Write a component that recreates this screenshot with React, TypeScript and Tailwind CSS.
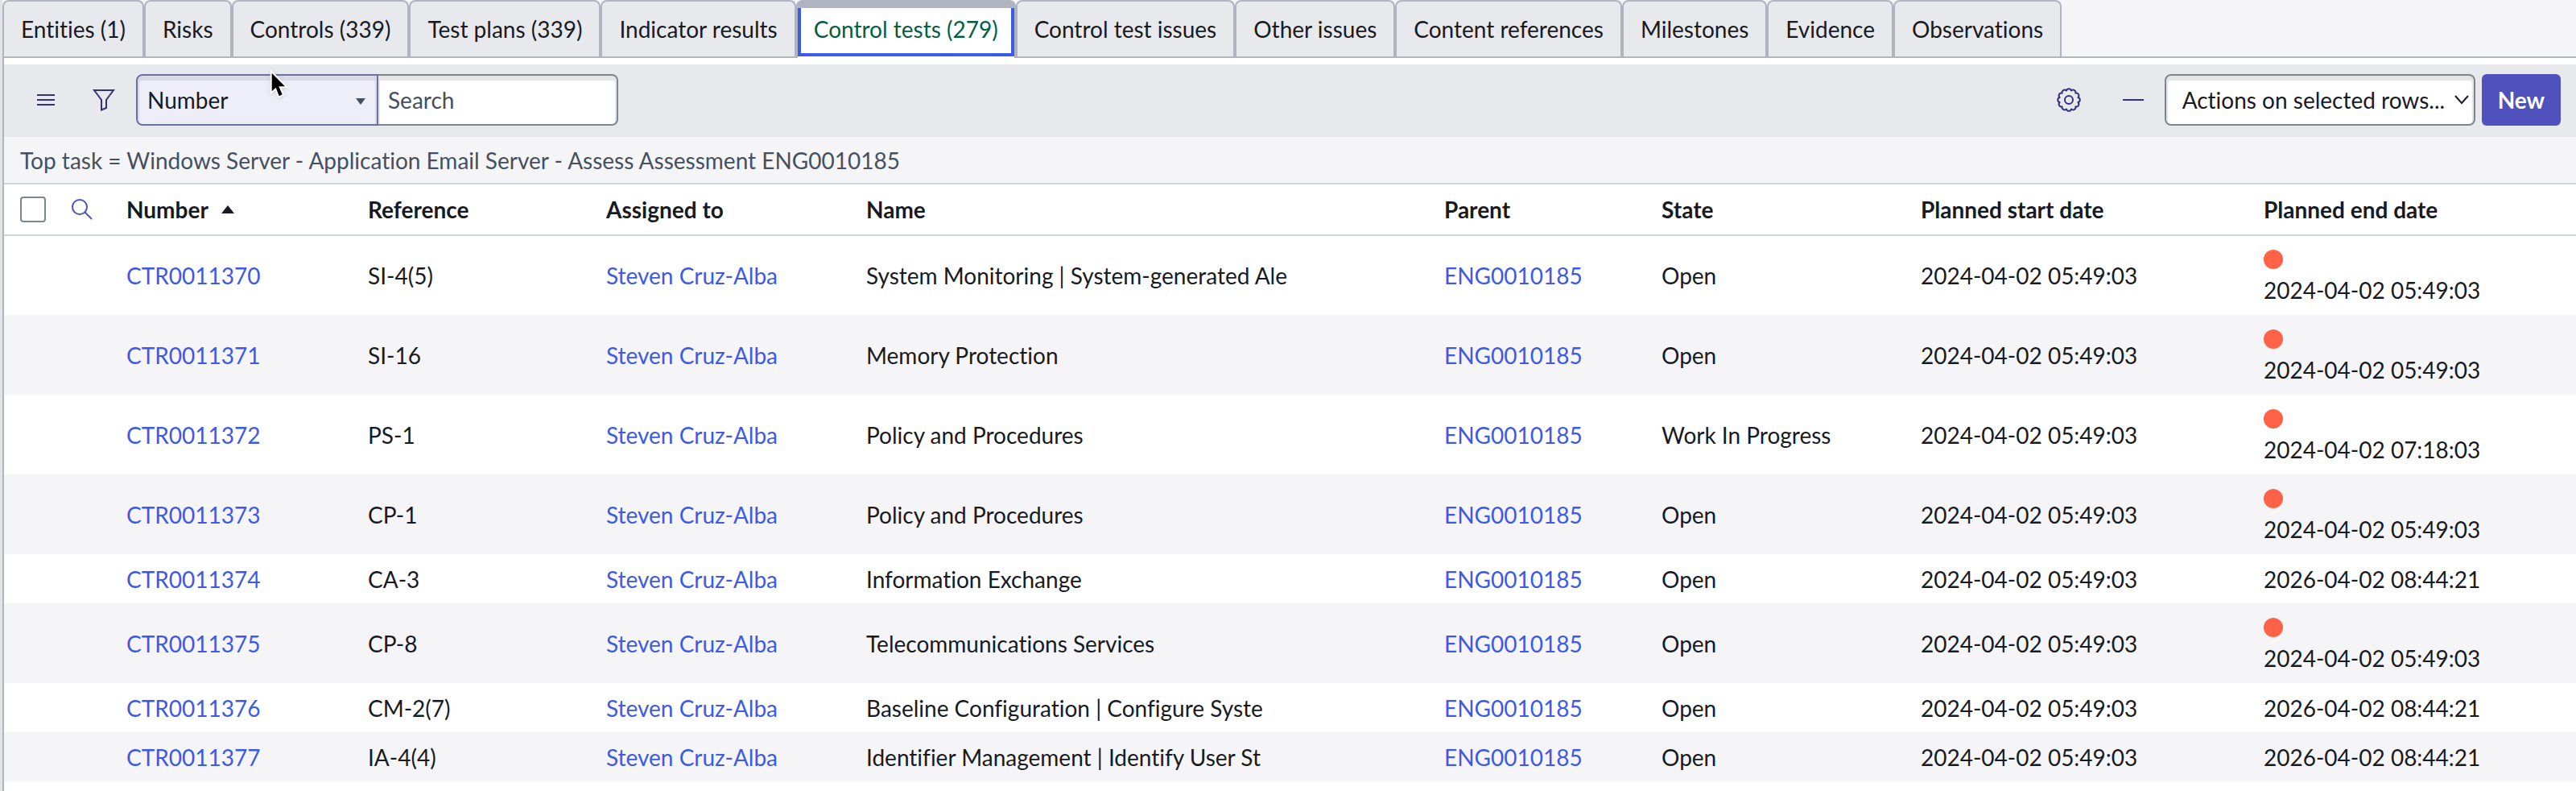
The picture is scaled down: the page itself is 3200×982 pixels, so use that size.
import { useState } from 'react';

type Row = {
  number: string;
  reference: string;
  name: string;
  state: string;
  end: string;
  overdue: boolean;
};

const TABS = [
  'Entities (1)',
  'Risks',
  'Controls (339)',
  'Test plans (339)',
  'Indicator results',
  'Control tests (279)',
  'Control test issues',
  'Other issues',
  'Content references',
  'Milestones',
  'Evidence',
  'Observations',
];

const ROWS: Row[] = [
  { number: 'CTR0011370', reference: 'SI-4(5)', name: 'System Monitoring | System-generated Ale', state: 'Open', end: '2024-04-02 05:49:03', overdue: true },
  { number: 'CTR0011371', reference: 'SI-16', name: 'Memory Protection', state: 'Open', end: '2024-04-02 05:49:03', overdue: true },
  { number: 'CTR0011372', reference: 'PS-1', name: 'Policy and Procedures', state: 'Work In Progress', end: '2024-04-02 07:18:03', overdue: true },
  { number: 'CTR0011373', reference: 'CP-1', name: 'Policy and Procedures', state: 'Open', end: '2024-04-02 05:49:03', overdue: true },
  { number: 'CTR0011374', reference: 'CA-3', name: 'Information Exchange', state: 'Open', end: '2026-04-02 08:44:21', overdue: false },
  { number: 'CTR0011375', reference: 'CP-8', name: 'Telecommunications Services', state: 'Open', end: '2024-04-02 05:49:03', overdue: true },
  { number: 'CTR0011376', reference: 'CM-2(7)', name: 'Baseline Configuration | Configure Syste', state: 'Open', end: '2026-04-02 08:44:21', overdue: false },
  { number: 'CTR0011377', reference: 'IA-4(4)', name: 'Identifier Management | Identify User St', state: 'Open', end: '2026-04-02 08:44:21', overdue: false },
];

function TabBar({ active, onSelect }: { active: string; onSelect: (tab: string) => void }) {
  return (
    <div role="tablist" className="-ml-0.5 flex items-start border-b-2 border-[#b0b4c0] bg-[#f5f5f8]">
      {TABS.map((tab) =>
        tab === active ? (
          <button
            key={tab}
            role="tab"
            aria-selected
            className="-mb-0.5 h-[72px] rounded-t-lg border-x-2 border-t-10 border-[#b0b4c0] bg-white pb-0.5 text-[#035e42]"
          >
            <span className="flex h-[60px] items-center border-x-4 border-b-4 border-[#3c59e7] px-4 pb-1">{tab}</span>
          </button>
        ) : (
          <button
            key={tab}
            role="tab"
            aria-selected={false}
            onClick={() => onSelect(tab)}
            className="h-[70px] rounded-t-lg border-x-2 border-t-2 border-[#b0b4c0] bg-[#e8e9ed] px-[21px]"
          >
            {tab}
          </button>
        )
      )}
    </div>
  );
}

function Toolbar() {
  return (
    <div className="flex h-[90px] items-center bg-[#e8e9ed] pr-[19px] pb-0.5 pl-5 text-[#32327f]">
      <button aria-label="List controls" className="flex w-16 justify-center">
        <svg width="22" height="16" viewBox="0 0 22 16" stroke="currentColor" strokeWidth="2">
          <path d="M0 2h22M0 8h22M0 14h22" />
        </svg>
      </button>
      <button aria-label="Filter" className="flex w-20 justify-center">
        <svg width="28" height="28" viewBox="0 0 28 28" fill="none" stroke="currentColor" strokeWidth="2">
          <path d="M2 2h24l-9 12v10l-6 2.500V14z" />
        </svg>
      </button>
      <div className="relative">
        <select
          aria-label="Search field"
          className="block h-16 w-[301px] appearance-none rounded-l-lg border-2 border-[#6a70a8] bg-[#eeeef9] pl-3 text-[#181a22] shadow-[inset_0_4px_0_2px_#dad9e3]"
        >
          <option>Number</option>
        </select>
        <svg className="pointer-events-none absolute top-[30px] right-4" width="12" height="8" viewBox="0 0 12 8" fill="#464f5e">
          <path d="M0 0h12L6 8z" />
        </svg>
      </div>
      <input
        type="search"
        aria-label="Search"
        placeholder="Search"
        className="h-16 w-[298px] rounded-r-lg border-2 border-l-0 border-[#7c8592] bg-white px-3 shadow-[inset_0_4px_0_2px_#e6e6e6] placeholder:text-[#464f5e]"
      />
      <button aria-label="Personalize list" className="ml-auto">
        <svg width="30" height="30" viewBox="0 0 30 30" fill="none" stroke="currentColor" strokeWidth="2">
          <circle cx="15" cy="15" r="5" />
          <path
            strokeLinejoin="round"
            d="M11.950 3.600A3.150 3.150 0 0 1 18.050 3.600A3.150 3.150 0 0 1 23.340 6.660A3.150 3.150 0 0 1 26.400 11.950A3.150 3.150 0 0 1 26.400 18.050A3.150 3.150 0 0 1 23.340 23.340A3.150 3.150 0 0 1 18.050 26.400A3.150 3.150 0 0 1 11.950 26.400A3.150 3.150 0 0 1 6.660 23.340A3.150 3.150 0 0 1 3.600 18.050A3.150 3.150 0 0 1 3.600 11.950A3.150 3.150 0 0 1 6.660 6.660A3.150 3.150 0 0 1 11.950 3.600Z"
          />
        </svg>
      </button>
      <button aria-label="Collapse" className="mr-[26px] ml-[52px]">
        <svg width="26" height="30" viewBox="0 0 26 30" stroke="currentColor" strokeWidth="2">
          <path d="M0 15h26" />
        </svg>
      </button>
      <div className="relative mr-2">
        <select
          aria-label="Actions on selected rows"
          className="block h-16 w-[386px] appearance-none rounded-lg border-2 border-[#7c8592] bg-white pl-5 text-[#181a22] shadow-[inset_0_4px_0_2px_#e6e6e6]"
        >
          <option>Actions on selected rows...</option>
        </select>
        <svg className="pointer-events-none absolute top-[26px] right-2" width="18" height="12" viewBox="0 0 18 12" fill="none" stroke="#181a22" strokeWidth="2">
          <path d="M1 1l8 9 8-9" />
        </svg>
      </div>
      <button className="h-16 rounded-md bg-[#4f52bd] px-5 font-bold text-white">New</button>
    </div>
  );
}

function ControlTable() {
  return (
    <table className="w-full table-fixed text-left">
      <thead>
        <tr className="h-[63px] border-b-2 border-[#cfd5dd]">
          <th className="w-[76px] pl-5">
            <input
              type="checkbox"
              aria-label="Select all rows"
              className="block size-8 appearance-none rounded-sm border-2 border-[#7c8592] bg-white"
            />
          </th>
          <th className="w-[76px] pl-2">
            <button aria-label="Search columns" className="block text-[#4f52bd]">
              <svg width="26" height="26" viewBox="0 0 26 26" fill="none" stroke="currentColor" strokeWidth="2">
                <circle cx="10" cy="10" r="9" />
                <path d="M16 16l9 9" />
              </svg>
            </button>
          </th>
          <th className="w-[300px]">
            <span className="flex items-center gap-4">
              Number
              <svg width="16" height="10" viewBox="0 0 16 10" fill="currentColor">
                <path d="M8 0l8 10H0z" />
              </svg>
            </span>
          </th>
          <th className="w-[296px]">Reference</th>
          <th className="w-[323px]">Assigned to</th>
          <th className="w-[718px]">Name</th>
          <th className="w-[270px]">Parent</th>
          <th className="w-[322px]">State</th>
          <th className="w-[426px]">Planned start date</th>
          <th>Planned end date</th>
        </tr>
      </thead>
      <tbody>
        {ROWS.map((row) => (
          <tr key={row.number} className="h-[61px] even:bg-[#f5f5f8]">
            <td />
            <td />
            <td><a href="#" className="text-[#3c59e7]">{row.number}</a></td>
            <td>{row.reference}</td>
            <td><a href="#" className="text-[#3c59e7]">Steven Cruz-Alba</a></td>
            <td>{row.name}</td>
            <td><a href="#" className="text-[#3c59e7]">ENG0010185</a></td>
            <td>{row.state}</td>
            <td>2024-04-02 05:49:03</td>
            <td className={row.overdue ? 'h-[99px]' : ''}>
              {row.overdue && <span className="mt-1 mb-2 block size-6 rounded-full bg-[#ff6347]" />}
              {row.end}
            </td>
          </tr>
        ))}
      </tbody>
    </table>
  );
}

export default function App() {
  const [activeTab, setActiveTab] = useState('Control tests (279)');

  return (
    <div className="min-h-screen bg-[#e2e3e6] pl-[3px] font-['Lato',sans-serif] text-[28px] leading-9 text-[#181a22] [font-variant-ligatures:none]">
      <main className="relative min-h-screen border-l-2 border-[#b0b4c0] bg-white">
        <TabBar active={activeTab} onSelect={setActiveTab} />
        <div className="pt-2">
          <Toolbar />
          <div className="flex h-[59px] items-center border-b-2 border-[#cfd5dd] bg-[#f5f5f8] px-5 text-[#464f5e]">
            Top task = Windows Server - Application Email Server - Assess Assessment ENG0010185
          </div>
          <ControlTable />
        </div>
        {/* mouse pointer */}
        <svg className="pointer-events-none absolute top-[86px] left-[328px] drop-shadow" width="26" height="40" viewBox="0 0 26 40">
          <path
            d="M4.700 4.700V27.300L9.700 22.700L13.700 33.300L17.700 31.300L13.300 21.300H21Z"
            fill="#000"
            stroke="#fff"
            strokeWidth="4"
            paintOrder="stroke"
          />
        </svg>
      </main>
    </div>
  );
}
